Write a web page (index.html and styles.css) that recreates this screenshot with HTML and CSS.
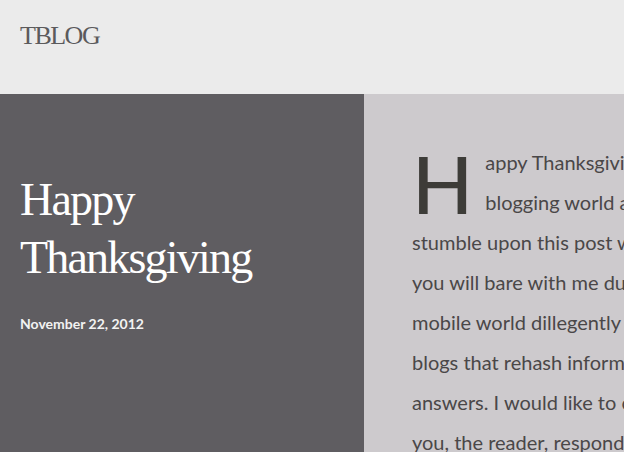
FILE: index.html
```html
<!DOCTYPE html>
<html>
<head>
<meta charset="utf-8">
<link rel="stylesheet" href="styles.css">
</head>
<body>
<header class="site-header">
  <div class="brand">TBLOG</div>
</header>
<main class="post">
  <section class="post-hero">
    <h1 class="post-title">Happy Thanksgiving</h1>
    <div class="post-date">November 22, 2012</div>
  </section>
  <article class="post-body">
    <p class="text"><span class="dropcap">H</span>appy Thanksgiving to everyone out there in the<br>blogging world and to all of those who may happen to<br>stumble upon this post while searching the web. I hope<br>you will bare with me during my journey through the<br>mobile world dillegently searching for answers, unlike<br>blogs that rehash information without giving any real<br>answers. I would like to offer my thanks to all of<br>you, the reader, respond and comment freely here.</p>
  </article>
</main>
</body>
</html>
```
FILE: styles.css
```css
html, body {
  margin: 0;
  padding: 0;
  height: 100%;
  overflow: hidden;
}
body {
  background: #cdcacd;
  font-family: Lato, "Liberation Sans", sans-serif;
}
.site-header {
  height: 94px;
  background: #ebebeb;
  display: flex;
  align-items: flex-start;
  padding: 0 20px;
  box-sizing: border-box;
}
.brand {
  font-family: "Liberation Serif", serif;
  font-size: 26px;
  color: #5b5a5c;
  margin-top: 21px;
  letter-spacing: -1.5px;
}
.post {
  display: flex;
  height: 358px;
}
.post-hero {
  width: 364px;
  flex: none;
  background: #5f5d61;
  padding: 77px 20px 0 20px;
  box-sizing: border-box;
}
.post-title {
  margin: 0;
  font-family: "Liberation Serif", serif;
  font-weight: normal;
  font-size: 46px;
  line-height: 58px;
  color: #ffffff;
  letter-spacing: -1.8px;
}
.post-date {
  margin-top: 28px;
  font-family: Lato, sans-serif;
  font-weight: bold;
  font-size: 14px;
  color: #f2f2f2;
}
.post-body {
  flex: none;
  width: 260px;
  padding: 48px 0 0 48px;
  overflow: hidden;
}
.text {
  margin: 0;
  font-size: 20px;
  line-height: 40px;
  color: #4a4748;
  white-space: nowrap;
}
.dropcap {
  float: left;
  font-size: 80px;
  font-weight: 500;
  line-height: 66px;
  margin: 8px 12px 0 0;
  color: #3d3c38;
}
```
